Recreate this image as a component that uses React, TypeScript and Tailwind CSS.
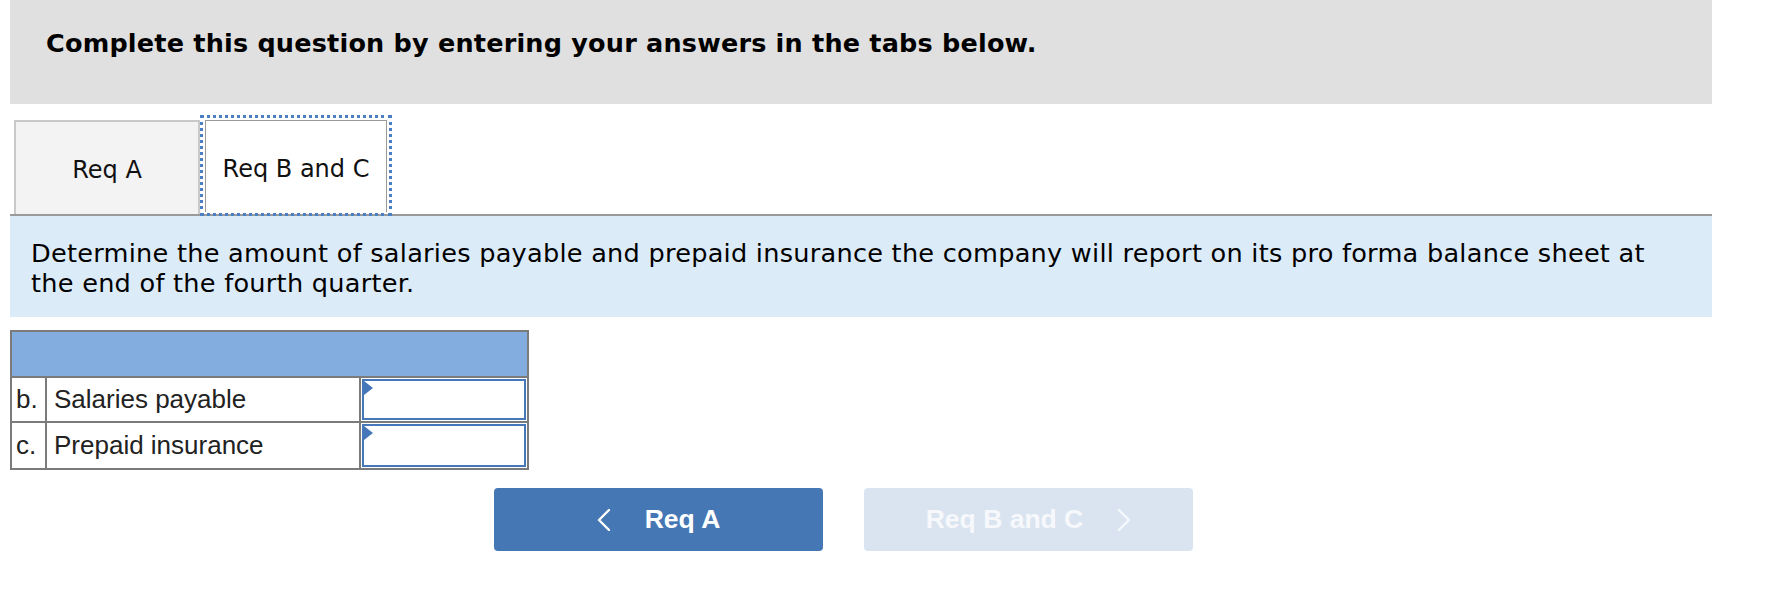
import React from "react";

const verdana = { fontFamily: '"DejaVu Sans", Verdana, sans-serif' };
const arial = { fontFamily: '"Liberation Sans", Arial, sans-serif' };

function Triangle() {
  return (
    <svg className="absolute left-0 top-0" width="9" height="14" viewBox="0 0 9 14">
      <polygon points="0,0 9,7 0,14" fill="#4677b8" />
    </svg>
  );
}

function Row({ letter, label, last }: { letter: string; label: string; last?: boolean }) {
  return (
    <div className={`flex h-[45px] ${last ? "" : "border-b-2 border-[#7b7b7b]"}`}>
      <div className="w-[35px] border-r-2 border-[#7b7b7b] flex items-center pl-[4px] text-[26px] text-[#222]" style={arial}>
        {letter}
      </div>
      <div className="w-[314px] border-r-2 border-[#7b7b7b] flex items-center pl-[7px] text-[26px] text-[#222]" style={arial}>
        {label}
      </div>
      <div className="flex-1 p-[1px]">
        <div className="relative h-full border-2 border-[#4677b8] bg-white">
          <Triangle />
        </div>
      </div>
    </div>
  );
}

function ChevronLeft() {
  return (
    <svg width="14" height="22" viewBox="0 0 14 22">
      <polyline points="12,1 2,11 12,21" fill="none" stroke="currentColor" strokeWidth="2.4" strokeLinecap="round" strokeLinejoin="round" />
    </svg>
  );
}

function ChevronRight() {
  return (
    <svg width="14" height="22" viewBox="0 0 14 22">
      <polyline points="2,1 12,11 2,21" fill="none" stroke="currentColor" strokeWidth="2.4" strokeLinecap="round" strokeLinejoin="round" />
    </svg>
  );
}

export default function App() {
  return (
    <div className="w-[1788px] h-[592px] bg-white overflow-hidden">
      <div className="ml-[10px] w-[1702px]">
        <div className="h-[104px] bg-[#e0e0e0] pl-[36px] pt-[28px]">
          <div className="text-[25.5px] font-bold text-black leading-[30px] tracking-[0.2px]" style={verdana}>
            Complete this question by entering your answers in the tabs below.
          </div>
        </div>

        <div className="mt-[11px] flex items-end pl-[4px] border-b-2 border-[#9a9a9a]">
          <div
            className="w-[186px] h-[94px] bg-[#f3f3f3] border-2 border-b-0 border-[#c9c9c9] flex items-center justify-center pt-[4px] text-[24px] text-[#111]"
            style={verdana}
          >
            Req A
          </div>
          <div className="relative -mb-[2px] w-[192px] h-[101px] border-[3px] border-dotted border-[#4a7fc4] px-[2px] pt-[2px] pb-[1px]">
            <div
              className="h-full bg-white border border-b-0 border-[#999] flex items-center justify-center pt-[4px] text-[24px] text-[#111]"
              style={verdana}
            >
              Req B and C
            </div>
          </div>
        </div>

        <div className="h-[101px] bg-[#dcebf8] pl-[21px] pt-[22px]">
          <p className="text-[25.6px] leading-[30px] text-black tracking-[0.25px]" style={verdana}>
            Determine the amount of salaries payable and prepaid insurance the company will report on its pro forma balance sheet at
            <br />
            the end of the fourth quarter.
          </p>
        </div>

        <div className="mt-[13px] w-[519px] border-2 border-[#7b7b7b]">
          <div className="h-[46px] bg-[#83acdf] border-b-2 border-[#7b7b7b]" />
          <Row letter="b." label="Salaries payable" />
          <Row letter="c." label="Prepaid insurance" last />
        </div>

        <div className="mt-[18px] ml-[484px] flex gap-[41px]">
          <div className="w-[329px] h-[63px] rounded-[4px] bg-[#4577b5] flex items-center justify-center gap-[34px] text-white">
            <ChevronLeft />
            <span className="text-[26.5px] font-bold" style={arial}>
              Req A
            </span>
          </div>
          <div className="w-[329px] h-[63px] rounded-[4px] bg-[#dae4f0] flex items-center justify-center gap-[34px] text-[#f6f8fb]">
            <span className="text-[26.5px] font-bold" style={arial}>
              Req B and C
            </span>
            <ChevronRight />
          </div>
        </div>
      </div>
    </div>
  );
}
